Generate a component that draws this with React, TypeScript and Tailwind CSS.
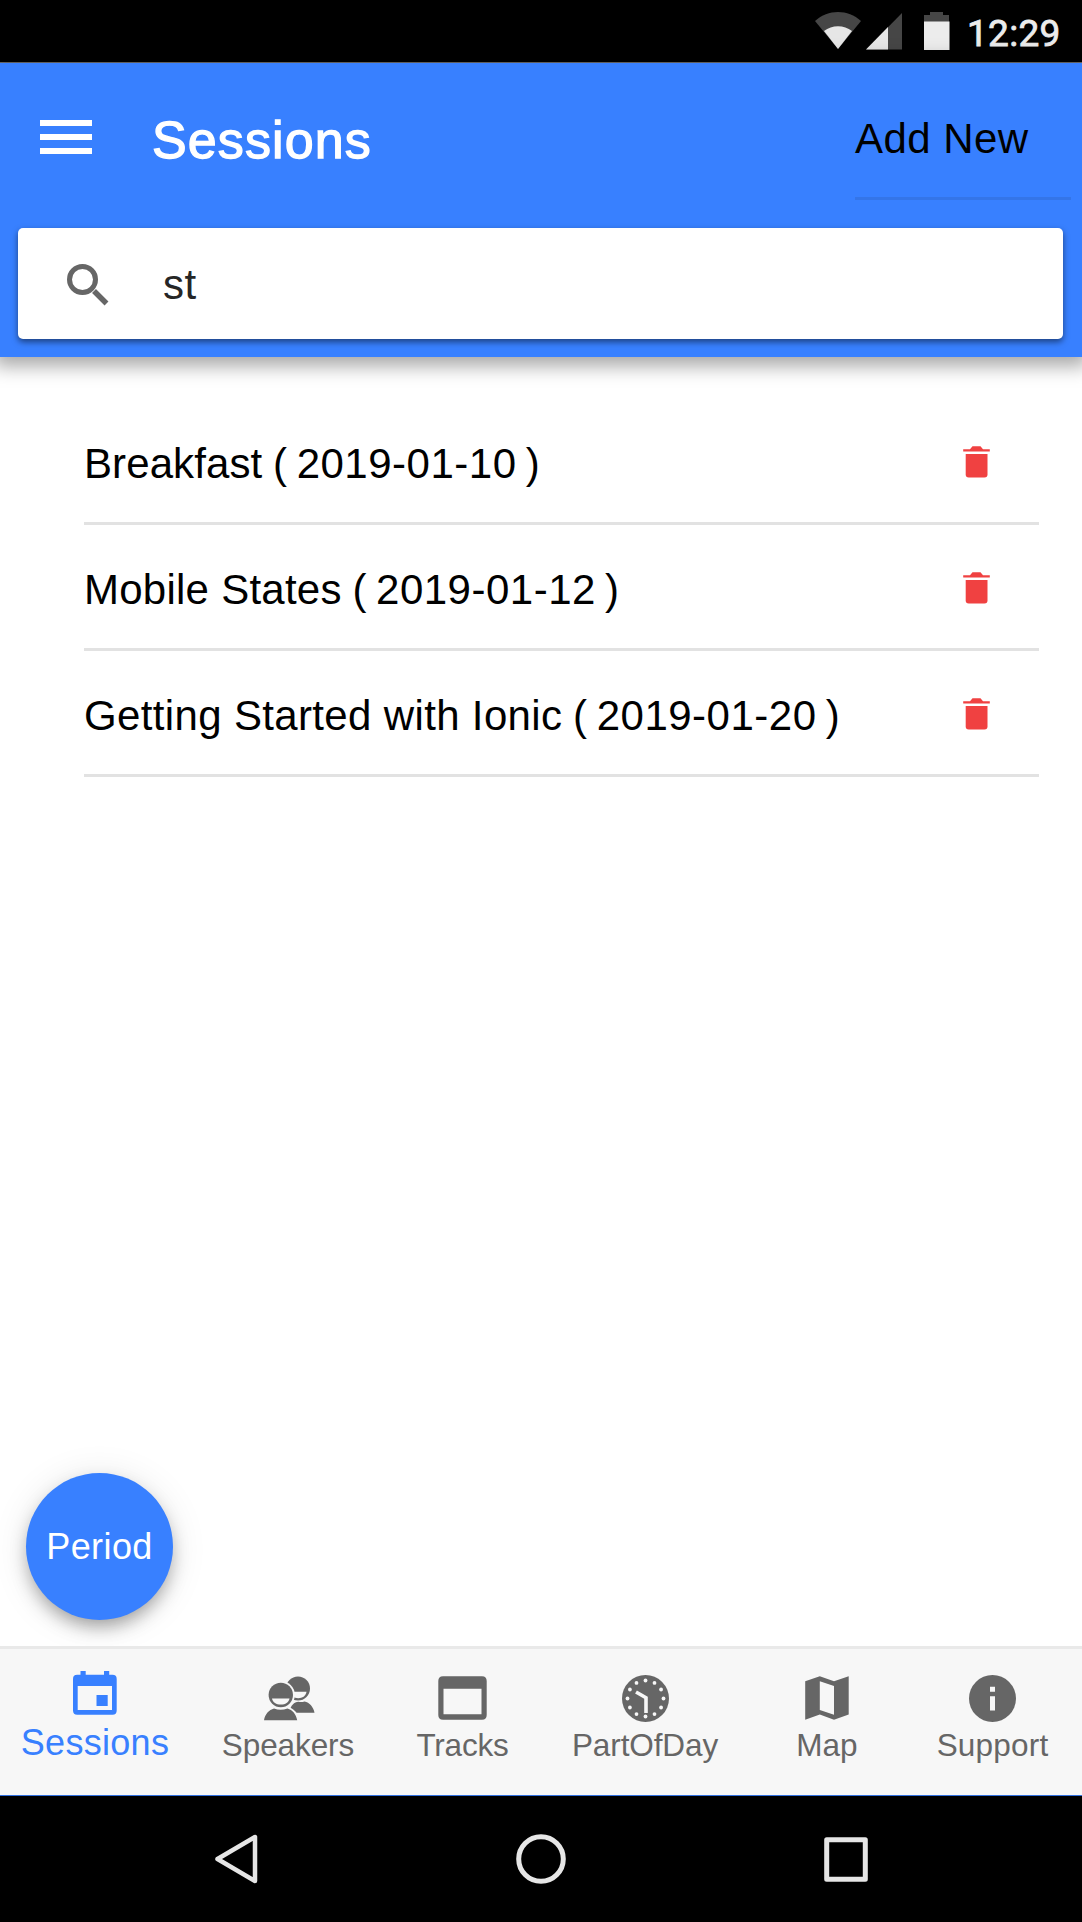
import React from "react";

const sessions = [
  { name: "Breakfast", date: "2019-01-10", tracking: "tracking-[0.100px]" },
  { name: "Mobile States", date: "2019-01-12", tracking: "tracking-[0.250px]" },
  { name: "Getting Started with Ionic", date: "2019-01-20", tracking: "tracking-[0.350px]" },
];

function WifiIcon() {
  return (
    <svg width="46" height="38" viewBox="0 0 46 38">
      <path d="M0 9C13-3 33-3 46 9L23 37Z" fill="#464646" />
      <path d="M9 19C17 12.500 29 12.500 37 19L23 37Z" fill="#e6e6e6" />
    </svg>
  );
}

function SignalIcon() {
  return (
    <svg width="37" height="38" viewBox="0 0 37 38">
      <path d="M0 37.500L36 1V37.500Z" fill="#464646" />
      <path d="M0 37.500L22 15V37.500Z" fill="#e6e6e6" />
    </svg>
  );
}

function BatteryIcon() {
  return (
    <svg width="26" height="38" viewBox="0 0 26 38">
      <path d="M6 0H19V3H25V10H0V3H6Z" fill="#464646" />
      <path d="M0 9.500H25.500V38H0Z" fill="#ececec" />
    </svg>
  );
}

function TrashIcon() {
  return (
    <svg width="27" height="32" viewBox="0 0 27 32" fill="#f04141">
      <path d="M7 3.200L9.500 0.200H17.500L20 3.200H26.800V5.400H0.200V3.200Z" />
      <path d="M2.700 8H24.500V28.500Q24.500 31.500 21.500 31.500H5.700Q2.700 31.500 2.700 28.500Z" />
    </svg>
  );
}

function CalendarIcon() {
  return (
    <svg width="44" height="44" viewBox="0 0 44 44" fill="currentColor">
      <path
        fillRule="evenodd"
        d="M7.500 0H12.700V3.800H31V0H36.200V3.800H39.500Q43.700 3.800 43.700 8V39.500Q43.700 43.700 39.500 43.700H4.200Q0 43.700 0 39.500V8Q0 3.800 4.200 3.800H7.500ZM4.700 15V39H39V15Z"
      />
      <path d="M23.500 24H34.700V35H23.500Z" />
    </svg>
  );
}

function PeopleIcon() {
  return (
    <svg width="51" height="45" viewBox="0 0 51 45" fill="currentColor">
      <circle cx="34" cy="12.500" r="12" />
      <path d="M26 15.800H42.500C41.500 20.500 38.500 22.200 34.200 22.200C30 22.200 27 20.500 26 15.800Z" fill="#f7f7f7" />
      <path d="M25 36.700C27 29 30 26 34.500 25.800Q37.500 26.500 40.500 25.500C45.500 26.500 49.500 31 50.500 36.700Z" />
      <circle cx="16.800" cy="19" r="14" fill="#f7f7f7" />
      <path d="M15 30H21C30 32 34.500 37.500 35.500 44H30Z" fill="#f7f7f7" />
      <circle cx="16.800" cy="19" r="12.200" />
      <path d="M8 22.600H25.500C24.500 26.900 21.500 28.600 16.800 28.600C12 28.600 9 26.900 8 22.600Z" fill="#f7f7f7" />
      <path d="M0 44.200C1 38 5 34 10 32.500Q16.500 35 23.500 32.500C28.500 34 32 38 33.200 44.200Z" />
    </svg>
  );
}

function WindowIcon() {
  return (
    <svg width="49" height="44" viewBox="0 0 49 44" fill="currentColor">
      <path
        fillRule="evenodd"
        d="M5 0.300H44Q48.700 0.300 48.700 5V39Q48.700 43.700 44 43.700H5Q0.300 43.700 0.300 39V5Q0.300 0.300 5 0.300ZM5.500 12.800V38.300H43.500V12.800Z"
      />
    </svg>
  );
}

const clockDots = Array.from({ length: 12 }, (_, i) => {
  const angle = (i * Math.PI) / 6;
  return { x: 23.5 + 18 * Math.sin(angle), y: 23.5 - 18 * Math.cos(angle) };
});

function ClockIcon() {
  return (
    <svg width="47" height="47" viewBox="0 0 47 47">
      <circle cx="23.500" cy="23.500" r="23.500" fill="currentColor" />
      {clockDots.map((dot, i) => (
        <circle key={i} cx={dot.x} cy={dot.y} r="1.900" fill="#f7f7f7" />
      ))}
      <path d="M24 38V22.800L14 17" fill="none" stroke="#f7f7f7" strokeWidth="3.600" />
    </svg>
  );
}

function MapIcon() {
  return (
    <svg width="44" height="44" viewBox="0 0 44 44" fill="currentColor">
      <path
        fillRule="evenodd"
        d="M0.200 5.300L14.800 0.300L29 5.300L43.700 0.300V38.500L29 43.700L14.800 38.500L0.200 43.700ZM14.800 5.200V34L29 38.800V10Z"
      />
    </svg>
  );
}

function InfoIcon() {
  return (
    <svg width="47" height="47" viewBox="0 0 47 47">
      <circle cx="23.500" cy="23.500" r="23.500" fill="currentColor" />
      <path d="M21 11.700H26V16.700H21ZM21 21.300H26V35.500H21Z" fill="#f7f7f7" />
    </svg>
  );
}

const tabs = [
  { label: "Sessions", Icon: CalendarIcon, box: "w-[190px] text-[36px] tracking-[0.300px] text-[#3880ff]", icon: "pt-[22px] h-[73px]" },
  { label: "Speakers", Icon: PeopleIcon, box: "w-[196px] text-[31.500px] tracking-[-0.100px] text-[#666]", icon: "pt-[27px] pl-[3px] h-[75px]" },
  { label: "Tracks", Icon: WindowIcon, box: "w-[153px] text-[31.500px] tracking-[-0.200px] text-[#666]", icon: "pt-[27px] h-[75px]" },
  { label: "PartOfDay", Icon: ClockIcon, box: "w-[212px] text-[31.500px] tracking-[-0.100px] text-[#666]", icon: "pt-[26px] h-[75px]" },
  { label: "Map", Icon: MapIcon, box: "w-[152px] text-[31.500px] text-[#666]", icon: "pt-[27px] h-[75px]" },
  { label: "Support", Icon: InfoIcon, box: "w-[179px] text-[31.500px] tracking-[0.200px] text-[#666]", icon: "pt-[26px] h-[75px]" },
];

export default function App() {
  return (
    <div className="flex h-[1922px] w-[1082px] flex-col overflow-hidden bg-white font-['Liberation_Sans',sans-serif] text-black">
      <div className="flex h-[63px] shrink-0 items-start justify-end border-b border-[#777] bg-black pt-[12px] pr-[21px]">
        <WifiIcon />
        <div className="ml-[5px]"><SignalIcon /></div>
        <div className="ml-[21px]"><BatteryIcon /></div>
        <span className="ml-[17px] w-[94px] font-['Roboto',sans-serif] text-[37px] leading-[43px] tracking-[0.300px] whitespace-nowrap text-[#ececec] [-webkit-text-stroke:0.800px_#ececec]">12:29</span>
      </div>

      <header className="relative z-10 flex h-[294px] shrink-0 flex-col bg-[#3880ff] shadow-[0_3px_18px_6px_rgba(0,0,0,0.350)]">
        <div className="flex h-[165px] items-start">
          <button className="mt-[56.500px] ml-[40px] flex w-[52px] flex-col gap-[8px]" aria-label="Menu">
            <span className="h-[6px] w-full bg-white" />
            <span className="h-[6px] w-full bg-white" />
            <span className="h-[6px] w-full bg-white" />
          </button>
          <h1 className="mt-[47px] ml-[60px] text-[52px] leading-[60px] tracking-[1.100px] text-white [-webkit-text-stroke:1.300px_white]">Sessions</h1>
          <div className="mt-[50px] mr-[11px] ml-auto h-[87px] w-[216px] border-b-[3px] border-[#3475e8] pt-px text-[42px] leading-[50px] tracking-[0.450px]">Add New</div>
        </div>
        <div className="mr-[19px] ml-[18px] flex h-[111px] items-center rounded-[5px] bg-white shadow-[0_3px_6px_rgba(0,0,0,0.5)]">
          <svg className="mt-[2px] ml-[49px]" width="42" height="42" viewBox="0 0 42 42" fill="none" stroke="#666" strokeWidth="5">
            <circle cx="15.500" cy="15.500" r="13" />
            <path d="M27 27L39.500 39.500" strokeWidth="5.500" />
          </svg>
          <span className="mt-[3px] ml-[54px] text-[42px] leading-[50px] tracking-[0.400px] text-[#262626]">st</span>
        </div>
      </header>

      <main className="relative flex-1 pt-[42px] pr-[43px] pl-[84px]">
        {sessions.map((session) => (
          <div key={session.date} className="flex h-[126px] items-center border-b-[3px] border-[#e2e2e2] pt-[3px] pr-[49px]">
            <span className="flex flex-1 pt-[4px] text-[42px] leading-[50px] whitespace-pre">
              <span className={session.tracking}>{session.name}</span>
              <span className="tracking-[-1px]"> ( </span>
              <span className="tracking-[0.500px]">{session.date}</span>
              <span className="tracking-[-2.500px]"> )</span>
            </span>
            <TrashIcon />
          </div>
        ))}
        <button className="absolute bottom-[26px] left-[26px] flex size-[147px] items-center justify-center rounded-full bg-[#3880ff] text-[36px] tracking-[0.400px] text-white shadow-[0_9px_18px_-3px_rgba(0,0,0,0.350),0_3px_36px_rgba(0,0,0,0.1)]">
          Period
        </button>
      </main>

      <nav className="relative flex h-[150px] shrink-0 border-t-[3px] border-b border-t-[#e9e9e9] border-b-[#3070e0] bg-[#f7f7f7]">
        {tabs.map(({ label, Icon, box, icon }) => (
          <div key={label} className={`flex shrink-0 flex-col items-center ${box}`}>
            <div className={`flex shrink-0 items-start ${icon}`}>
              <Icon />
            </div>
            <span className="leading-[42px]">{label}</span>
          </div>
        ))}
      </nav>

      <div className="flex h-[126px] shrink-0 items-center bg-black">
        <svg className="ml-[214px]" width="44" height="50" viewBox="0 0 44 50" fill="none" stroke="#e6e6e6" strokeWidth="4.500" strokeLinejoin="round">
          <path d="M41 3V47L3.500 25Z" />
        </svg>
        <svg className="ml-[258px]" width="50" height="50" viewBox="0 0 50 50" fill="none" stroke="#e6e6e6" strokeWidth="5">
          <circle cx="25" cy="25" r="22.300" />
        </svg>
        <svg className="ml-[258px]" width="44" height="45" viewBox="0 0 44 45" fill="none" stroke="#e6e6e6" strokeWidth="5" strokeLinejoin="round">
          <path d="M2.700 2.700H41.300V42.300H2.700Z" />
        </svg>
      </div>
    </div>
  );
}
